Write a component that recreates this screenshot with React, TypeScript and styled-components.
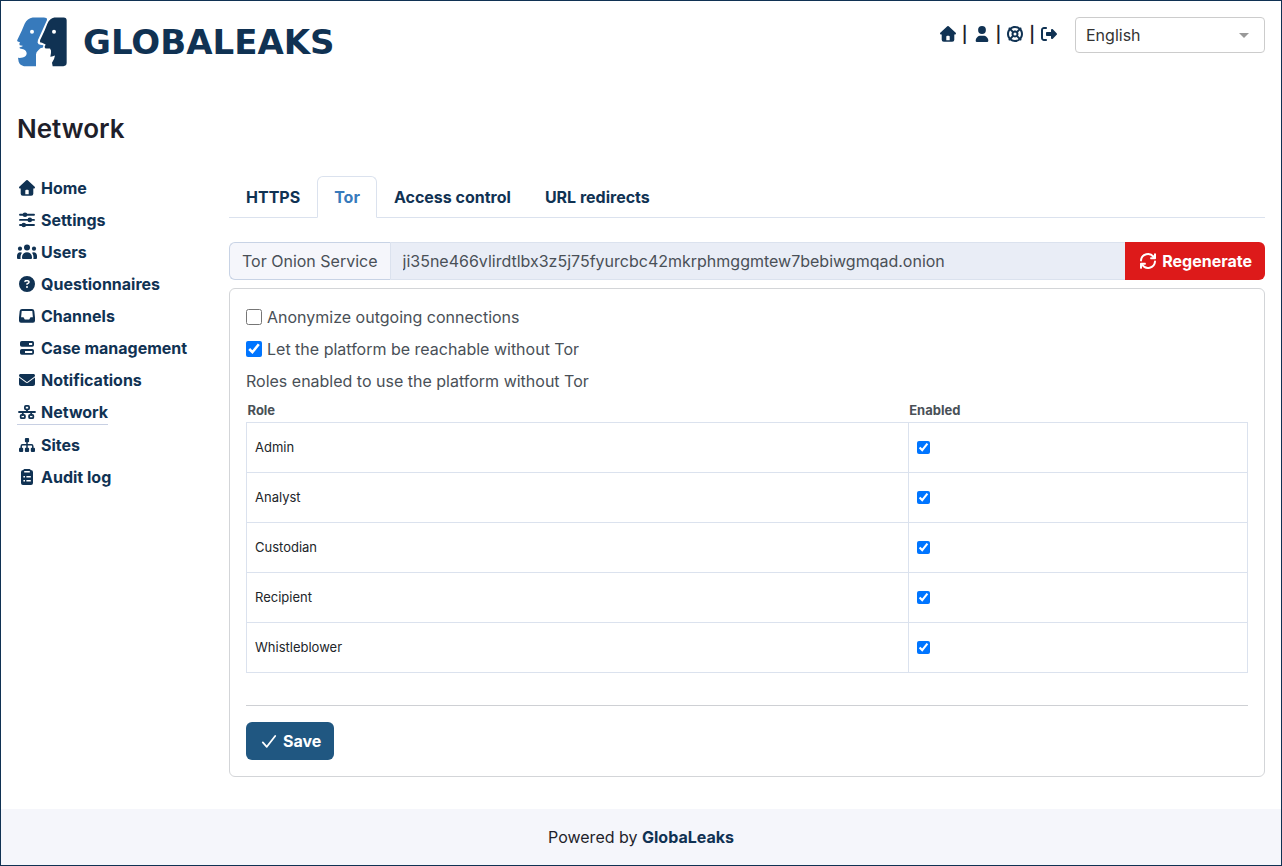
import React from "react";
import styled, { createGlobalStyle } from "styled-components";
import { FaCircleQuestion, FaEnvelope, FaLifeRing, FaRightFromBracket } from "react-icons/fa6";

const navy = "#103253";
const line = "#dbe2ee";

const GlobalStyle = createGlobalStyle`
  *, *::before, *::after { box-sizing: border-box; }
  body {
    margin: 0;
    background: #fff;
    color: #1f1f2b;
    font-family: Inter, "Liberation Sans", sans-serif;
    font-size: 16px;
    line-height: 24px;
  }
  a { color: ${navy}; font-weight: 700; text-decoration: none; }
  button, input, select { font: inherit; }
`;

const Page = styled.div`
  display: flex;
  flex-direction: column;
  min-height: 100vh;
  border: 1px solid ${navy};
`;

const Header = styled.header`
  display: flex;
  align-items: flex-start;
  justify-content: space-between;
  padding: 16px 16px 0;
`;

const Brand = styled.a`
  display: flex;
  align-items: center;
  gap: 16px;
  font-family: "DejaVu Sans", Inter, sans-serif;
  font-size: 34px;
  line-height: 50px;
`;

const HeaderTools = styled.div`
  display: flex;
  align-items: center;
  gap: 16px;
`;

const QuickLinks = styled.nav`
  display: flex;
  align-items: center;
  gap: 4px;
  font-weight: 600;
  padding-bottom: 2px;
`;

const IconBox = styled.span`
  display: inline-flex;
  flex: none;
  align-items: center;
  justify-content: center;
  width: 20px;
  height: 24px;
`;

const QuickLink = styled.a`
  display: flex;
`;

const SelectWrap = styled.div`
  display: grid;
  align-items: center;
  width: 190px;
  color: #999;
  > * { grid-area: 1 / 1; }
  > svg { justify-self: end; margin-right: 16px; pointer-events: none; }
`;

const LanguageSelect = styled.select`
  appearance: none;
  width: 100%;
  height: 36px;
  padding: 0 28px 0 10px;
  border: 1px solid #ccc;
  border-radius: 4px;
  background: #fff;
  color: #333;
`;

const Title = styled.h1`
  margin: 0;
  padding: 46px 16px 0;
  font-size: 26px;
  font-weight: 600;
  line-height: 31px;
`;

const Columns = styled.div`
  display: grid;
  grid-template-columns: repeat(12, minmax(0, 1fr));
  column-gap: 24px;
  padding: 32px 16px;
`;

const Sidebar = styled.nav`
  grid-column: span 2;
  display: flex;
  flex-direction: column;
  align-items: flex-start;
  gap: 8px;
`;

const SideLink = styled.a<{ $active?: boolean }>`
  display: flex;
  gap: 4px;
  white-space: nowrap;
  border-bottom: ${(p) => (p.$active ? "1px solid #c8d0e3" : "0")};
`;

const Main = styled.main`
  grid-column: span 10;
`;

const Tabs = styled.div`
  display: flex;
  border-bottom: 1px solid ${line};
  margin-bottom: 24px;
`;

const Tab = styled.button<{ $active?: boolean }>`
  margin-bottom: -1px;
  padding: 8px 16px;
  border: 1px solid ${(p) => (p.$active ? line : "transparent")};
  border-bottom-color: ${(p) => (p.$active ? "#fff" : "transparent")};
  border-radius: 6px 6px 0 0;
  background: ${(p) => (p.$active ? "#fff" : "transparent")};
  color: ${(p) => (p.$active ? "#377abc" : navy)};
  font-weight: 700;
`;

const InputGroup = styled.div`
  display: flex;
  height: 38px;
  margin-bottom: 8px;
`;

const InputLabel = styled.label`
  padding: 6px 12px;
  border: 1px solid #c8d3e5;
  border-right-color: ${line};
  border-radius: 6px 0 0 6px;
  background: #f5f6fb;
  color: #495057;
`;

const OnionInput = styled.input`
  flex: 1;
  min-width: 0;
  padding: 6px 12px;
  border: 1px solid ${line};
  border-width: 1px 0;
  border-radius: 0;
  background: #e9edf6;
  color: #495057;
`;

const Button = styled.button<{ $danger?: boolean }>`
  display: inline-flex;
  align-items: center;
  gap: 4px;
  height: 38px;
  padding: 0 13px;
  border: 0;
  border-radius: ${(p) => (p.$danger ? "0 6px 6px 0" : "6px")};
  background: ${(p) => (p.$danger ? "#dd1a1a" : "#205781")};
  color: #fff;
  font-weight: 700;
`;

const Card = styled.form`
  padding: 16px;
  border: 1px solid #d3d5d8;
  border-radius: 6px;
  color: #495057;
`;

const CheckRow = styled.label`
  display: flex;
  align-items: center;
  gap: 5px;
  margin-bottom: 8px;
`;

const Checkbox = styled.input`
  width: 16px;
  height: 16px;
  margin: 0;
`;

const RoleCheckbox = styled.input`
  display: block;
  width: 13px;
  height: 13px;
  margin: 0;
`;

const Note = styled.p`
  margin: 0 0 8px;
`;

const RoleTable = styled.table`
  width: 100%;
  border-collapse: collapse;
  table-layout: fixed;
  font-size: 13px;
  line-height: 19px;
`;

const HeadCell = styled.th<{ $wide?: boolean }>`
  width: ${(p) => (p.$wide ? "66.1%" : "auto")};
  padding: 0 1px 2px;
  font-weight: 700;
  text-align: left;
`;

const Cell = styled.td`
  height: 50px;
  padding: 0 8px;
  border: 1px solid ${line};
  color: #212529;
`;

const Divider = styled.hr`
  margin: 32px 0 16px;
  border: 0;
  border-top: 1px solid #ced0d4;
`;

const Footer = styled.footer`
  margin-top: auto;
  padding: 16px;
  background: #f5f6fb;
  text-align: center;
`;

function LogoMark() {
  return (
    <svg width="50" height="50" viewBox="51 50 150 149" aria-hidden="true">
      <path
        fill="#377abc"
        d="M98 51H132Q144 51 140 61L119 107Q112 120 113 127Q115 133 121 133L130 134L129 141Q120 141 115 149Q108 154 108 162V197H72Q60 195 56 184L54 172Q62 173 68 171Q78 170 80 160Q80 149 70 146L60 144L58 141L67 138L68 136L59 134L58 130L60 125L53 123Q50 121 53 116Q66 91 74 70Q82 53 98 51Z"
      />
      <path
        fill={navy}
        d="M163 51H191Q200 51 200 60V187Q200 197 190 197H158L156 187Q163 178 165 165L156 168L151 169Q154 157 153 150L150 144H140L135 143L134 138L137 132L126 127L120 125Q118 120 123 113Q134 92 142 70Q149 53 163 51Z"
      />
      <circle cx="96" cy="94" r="6" fill="#fff" />
      <circle cx="162" cy="94" r="6" fill="#fff" />
    </svg>
  );
}

function Glyph({ width = 16, children }: { width?: number; children: React.ReactNode }) {
  return (
    <svg width={width} height="16" viewBox={`0 0 ${width} 16`} fill="currentColor" aria-hidden="true">
      {children}
    </svg>
  );
}

const HouseIcon = () => (
  <Glyph>
    <path
      fillRule="evenodd"
      d="M7.3.3Q8 -.3 8.7.3L15.7 6.8Q16.2 7.4 15.8 8Q15.5 8.5 14.8 8.5H14.3V13.7Q14.3 15.8 12.2 15.8H3.8Q1.7 15.8 1.7 13.7V8.5H1.2Q.5 8.5.2 8Q-.2 7.4.3 6.8ZM7.3 9.8Q6.3 9.8 6.3 10.8V14.3H9.7V10.8Q9.7 9.8 8.7 9.8Z"
    />
  </Glyph>
);

const SlidersIcon = () => (
  <Glyph>
    <path d="M1 2.8H15M1 7.9H15M1 13H15" stroke="currentColor" strokeWidth="1.9" strokeLinecap="round" />
    <circle cx="6" cy="2.8" r="2.3" />
    <circle cx="10.8" cy="7.9" r="2.3" />
    <circle cx="4.8" cy="13" r="2.3" />
  </Glyph>
);

const UsersIcon = () => (
  <Glyph width={20}>
    <circle cx="10" cy="3.6" r="3" />
    <circle cx="3" cy="4.7" r="2.1" />
    <circle cx="17" cy="4.7" r="2.1" />
    <path d="M5 13.5C5 10.4 7 8.2 10 8.2S15 10.4 15 13.5V14Q15 15 14 15H6Q5 15 5 14Z" />
    <path d="M0 12C0 9.8 1.4 8.3 3.3 8.3Q4.2 8.3 5 8.8Q3.5 10.8 3.5 13.4V14Q3.5 14.6 3.7 15H1Q0 15 0 14ZM20 12C20 9.8 18.6 8.3 16.7 8.3Q15.8 8.3 15 8.8Q16.5 10.8 16.5 13.4V14Q16.5 14.6 16.3 15H19Q20 15 20 14Z" />
  </Glyph>
);

const InboxIcon = () => (
  <Glyph>
    <path
      fillRule="evenodd"
      d="M3 1H13Q15 1 15.3 3L16 9.5V12.8Q16 14.8 14 14.8H2Q0 14.8 0 12.8V9.5L.7 3Q1 1 3 1ZM2.7 3L2.1 9.2H4.5L5.8 11.5H10.2L11.5 9.2H13.9L13.3 3Z"
    />
  </Glyph>
);

const CasesIcon = () => (
  <Glyph>
    <path
      fillRule="evenodd"
      d="M2.8 1H13.2Q15 1 15 2.8V5Q15 6.8 13.2 6.8H2.8Q1 6.8 1 5V2.8Q1 1 2.8 1ZM10 3V4.9H13.2V3ZM2.8 9H13.2Q15 9 15 10.8V13Q15 14.8 13.2 14.8H2.8Q1 14.8 1 13V10.8Q1 9 2.8 9ZM6 11V12.9H13.2V11Z"
    />
  </Glyph>
);

const NetworkIcon = () => (
  <Glyph width={20}>
    <g fill="none" stroke="currentColor" strokeWidth="1.8" strokeLinecap="round">
      <path d="M2 8H18M10 6V8M5.8 8V11M14.2 8V11" />
      <rect x="7.9" y="1.9" width="4.2" height="3.4" rx="1" />
      <rect x="3.7" y="10.8" width="4.2" height="3.4" rx="1" />
      <rect x="12.1" y="10.8" width="4.2" height="3.4" rx="1" />
    </g>
  </Glyph>
);

const SitemapIcon = () => (
  <Glyph>
    <path d="M8 4V11M2.2 11V9.2Q2.2 7.8 3.6 7.8H12.4Q13.8 7.8 13.8 9.2V11" fill="none" stroke="currentColor" strokeWidth="1.5" />
    <rect x="5.9" y="1" width="4.2" height="4.2" rx="1" />
    <rect x="0" y="10.8" width="4.2" height="4.2" rx="1" />
    <rect x="5.9" y="10.8" width="4.2" height="4.2" rx="1" />
    <rect x="11.8" y="10.8" width="4.2" height="4.2" rx="1" />
  </Glyph>
);

const ClipboardIcon = () => (
  <Glyph>
    <path
      fillRule="evenodd"
      d="M5.5 0H10.5Q11.3 0 11.7 1Q14 1 14 3V14Q14 16 12 16H4Q2 16 2 14V3Q2 1 4.3 1Q4.7 0 5.5 0ZM5.2 2V3.6H10.8V2ZM4.4 7V8.5H6V7ZM7.4 7V8.5H11.8V7ZM4.4 11V12.5H6V11ZM7.4 11V12.5H11.8V11Z"
    />
  </Glyph>
);

const UserIcon = () => (
  <Glyph>
    <circle cx="8" cy="4" r="3.9" />
    <path d="M1.7 14.8C1.7 11.8 3.9 9.7 6.8 9.7H9.2C12.1 9.7 14.3 11.8 14.3 14.8Q14.3 16 13.2 16H2.8Q1.7 16 1.7 14.8Z" />
  </Glyph>
);

const RotateIcon = () => (
  <Glyph>
    <path d="M1 7.4A7 7 0 0 1 13.8 4.2M15 8.6A7 7 0 0 1 2.2 11.8" fill="none" stroke="currentColor" strokeWidth="2" strokeLinecap="round" />
    <path d="M16 .8V5.3Q16 6.2 15.1 6.2H10.6Q9.6 5.4 10.6 4.3H13L14 3.3V.8Q15 -.3 16 .8ZM0 15.2V10.7Q0 9.8.9 9.8H5.4Q6.4 10.6 5.4 11.7H3L2 12.7V15.2Q1 16.3 0 15.2Z" />
  </Glyph>
);

const CheckIcon = () => (
  <Glyph>
    <path d="M1.8 9.4L5.8 13.8L14.2 3" fill="none" stroke="currentColor" strokeWidth="1.8" strokeLinecap="round" strokeLinejoin="round" />
  </Glyph>
);

const sideItems = [
  { label: "Home", Icon: HouseIcon },
  { label: "Settings", Icon: SlidersIcon },
  { label: "Users", Icon: UsersIcon },
  { label: "Questionnaires", Icon: FaCircleQuestion },
  { label: "Channels", Icon: InboxIcon },
  { label: "Case management", Icon: CasesIcon },
  { label: "Notifications", Icon: FaEnvelope },
  { label: "Network", Icon: NetworkIcon },
  { label: "Sites", Icon: SitemapIcon },
  { label: "Audit log", Icon: ClipboardIcon },
];

const quickItems = [
  { label: "Home", Icon: HouseIcon },
  { label: "Preferences", Icon: UserIcon },
  { label: "Help", Icon: FaLifeRing },
  { label: "Logout", Icon: FaRightFromBracket },
];

const tabs = ["HTTPS", "Tor", "Access control", "URL redirects"];
const roles = ["Admin", "Analyst", "Custodian", "Recipient", "Whistleblower"];

export default function App() {
  return (
    <>
      <GlobalStyle />
      <Page>
        <Header>
          <Brand href="#home">
            <LogoMark />
            <span>GLOBALEAKS</span>
          </Brand>
          <HeaderTools>
            <QuickLinks aria-label="Account">
              {quickItems.map(({ label, Icon }, i) => (
                <React.Fragment key={label}>
                  {i > 0 && <span>|</span>}
                  <QuickLink href="#quick" aria-label={label}>
                    <IconBox><Icon /></IconBox>
                  </QuickLink>
                </React.Fragment>
              ))}
            </QuickLinks>
            <SelectWrap>
              <LanguageSelect aria-label="Language" defaultValue="English">
                <option>English</option>
              </LanguageSelect>
              <svg width="10" height="5" viewBox="0 0 10 5" aria-hidden="true">
                <path d="M0 0H10L5 5Z" fill="currentColor" />
              </svg>
            </SelectWrap>
          </HeaderTools>
        </Header>
        <Title>Network</Title>
        <Columns>
          <Sidebar aria-label="Administration">
            {sideItems.map(({ label, Icon }) => (
              <SideLink key={label} href="#section" $active={label === "Network"}>
                <IconBox><Icon /></IconBox>
                <span>{label}</span>
              </SideLink>
            ))}
          </Sidebar>
          <Main>
            <Tabs role="tablist">
              {tabs.map((tab) => (
                <Tab key={tab} type="button" role="tab" aria-selected={tab === "Tor"} $active={tab === "Tor"}>
                  {tab}
                </Tab>
              ))}
            </Tabs>
            <InputGroup>
              <InputLabel htmlFor="onion">Tor Onion Service</InputLabel>
              <OnionInput
                id="onion"
                readOnly
                value="ji35ne466vlirdtlbx3z5j75fyurcbc42mkrphmggmtew7bebiwgmqad.onion"
              />
              <Button type="button" $danger>
                <IconBox><RotateIcon /></IconBox>
                Regenerate
              </Button>
            </InputGroup>
            <Card>
              <CheckRow>
                <Checkbox type="checkbox" />
                Anonymize outgoing connections
              </CheckRow>
              <CheckRow>
                <Checkbox type="checkbox" defaultChecked />
                Let the platform be reachable without Tor
              </CheckRow>
              <Note>Roles enabled to use the platform without Tor</Note>
              <RoleTable>
                <thead>
                  <tr>
                    <HeadCell $wide>Role</HeadCell>
                    <HeadCell>Enabled</HeadCell>
                  </tr>
                </thead>
                <tbody>
                  {roles.map((role) => (
                    <tr key={role}>
                      <Cell>{role}</Cell>
                      <Cell>
                        <RoleCheckbox type="checkbox" defaultChecked aria-label={role} />
                      </Cell>
                    </tr>
                  ))}
                </tbody>
              </RoleTable>
              <Divider />
              <Button type="button">
                <IconBox><CheckIcon /></IconBox>
                Save
              </Button>
            </Card>
          </Main>
        </Columns>
        <Footer>
          Powered by <a href="#globaleaks">GlobaLeaks</a>
        </Footer>
      </Page>
    </>
  );
}
